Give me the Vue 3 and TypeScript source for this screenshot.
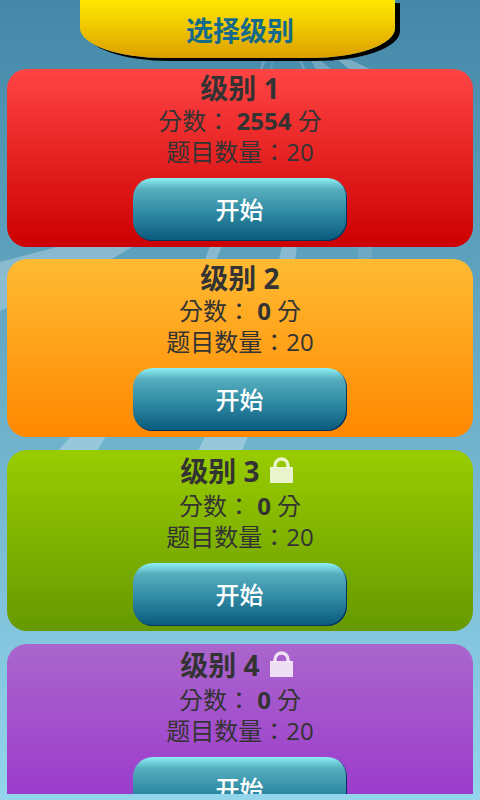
<script setup lang="ts">
interface Level {
  id: number
  name: string
  score: number
  count: number
  tone: string
  locked: boolean
}

const levels: Level[] = [
  { id: 1, name: '级别 1', score: 2554, count: 20, tone: 'red', locked: false },
  { id: 2, name: '级别 2', score: 0, count: 20, tone: 'orange', locked: false },
  { id: 3, name: '级别 3', score: 0, count: 20, tone: 'green', locked: true },
  { id: 4, name: '级别 4', score: 0, count: 20, tone: 'purple', locked: true },
]

const rays: { points: string; alpha: number }[] = [
  { points: '0,262 57,247 132,247 110,260 7,308 0,311', alpha: 0.27 },
  { points: '210,246 222,246 216,260 205,260', alpha: 0.27 },
  { points: '282,246 297,246 295,260 279,260', alpha: 0.27 },
  { points: '358,246 372,246 372,260 358,260', alpha: 0.1 },
  { points: '71,436 106,436 97,451 58,451', alpha: 0.27 },
  { points: '205,436 248,436 242,451 198,451', alpha: 0.27 },
  { points: '263,60 266,60 262,70 259,70', alpha: 0.2 },
  { points: '272,60 273,60 272,70 270,70', alpha: 0.15 },
  { points: '299,60 301,60 306,70 303,70', alpha: 0.2 },
  { points: '311,60 320,60 332,70 316,70', alpha: 0.22 },
  { points: '338,60 351,60 372,70 350,70', alpha: 0.27 },
]
</script>

<template>
  <div class="screen">
    <svg class="rays" viewBox="0 0 480 800" width="480" height="800" aria-hidden="true">
      <polygon v-for="(ray, i) in rays" :key="i" :points="ray.points" :fill-opacity="ray.alpha" />
    </svg>
    <header class="banner"><h1>选择级别</h1></header>
    <main class="levels">
      <section v-for="level in levels" :key="level.id" class="card" :class="level.tone">
        <div class="title">
          <h2>{{ level.name }}</h2>
          <svg v-if="level.locked" class="lock" viewBox="0 0 23 26" width="23" height="26" aria-hidden="true">
            <path d="M5 11V8.500a6.500 6.500 0 0 1 13 0V11" fill="none" stroke="currentColor" stroke-width="3.400" />
            <rect x="0" y="10" width="23" height="16" fill="currentColor" />
          </svg>
        </div>
        <p class="line">分数： <b>{{ level.score }}</b> 分</p>
        <p class="line">题目数量：{{ level.count }}</p>
        <button class="start" type="button">开始</button>
      </section>
    </main>
  </div>
</template>

<style>
html,
body {
  margin: 0;
  background: #93d5ea;
}
</style>

<style scoped>
.screen {
  position: relative;
  width: 480px;
  height: 800px;
  overflow: hidden;
  font-family: "Open Sans", "Noto Sans CJK TC", sans-serif;
  background: linear-gradient(180deg, #4488a8 0%, #93d5ea 100%);
}
.rays {
  position: absolute;
  inset: 0;
  fill: #fff;
}
.banner {
  position: relative;
  box-sizing: border-box;
  width: 315px;
  height: 58px;
  margin: 0 0 11px 80px;
  display: flex;
  align-items: center;
  justify-content: center;
  padding: 4px 0 0 5px;
  border-radius: 0 0 85px 85px / 0 0 30px 30px;
  background: linear-gradient(180deg, #ffe900 0%, #dd9f00 100%);
  box-shadow: 5px 3px 0 #000;
}
.banner h1 {
  margin: 0;
  font-size: 27px;
  line-height: 32px;
  font-weight: 700;
  color: #136a8a;
}
.levels {
  position: relative;
  height: 725px;
  padding: 0 7px;
  overflow: hidden;
  display: flex;
  flex-direction: column;
  gap: 12.7px;
}
.card {
  flex: none;
  padding-bottom: 5.7px;
  border-radius: 20px;
  color: #333;
  display: flex;
  flex-direction: column;
  align-items: center;
}
.card.red {
  background: linear-gradient(180deg, #ff4444, #cc0000);
}
.card.orange {
  background: linear-gradient(180deg, #ffbb33, #ff8800);
}
.card.green {
  background: linear-gradient(180deg, #99cc00, #669900);
  padding-bottom: 5.2px;
}
.card.purple {
  background: linear-gradient(180deg, #aa66cc, #9933cc);
  padding-bottom: 5.2px;
}
.title {
  display: flex;
  align-items: center;
  min-height: 36px;
}
.title h2 {
  margin: 0;
  padding-top: 2px;
  font-size: 28px;
  line-height: 34px;
  font-weight: 700;
}
.lock {
  margin: 7px 7px 7px 10px;
  color: rgba(255, 255, 255, 0.8);
}
.line {
  margin: 0;
  font-size: 24px;
  line-height: 31px;
  white-space: pre-wrap;
}
.line b {
  font-weight: 700;
}
.start {
  box-sizing: border-box;
  width: 214px;
  height: 63px;
  margin: 11px 0 0 -1px;
  padding: 0 0 2px;
  border: 0;
  border-radius: 20px;
  font: 500 24px "Open Sans", "Noto Sans CJK TC", sans-serif;
  color: #fff;
  background: linear-gradient(180deg, #8ef2f6 0%, #55adbd 18%, #2f8aa4 55%, #0a5a7c 100%);
  box-shadow: inset -1px -1px 0 #06315e;
}
</style>
